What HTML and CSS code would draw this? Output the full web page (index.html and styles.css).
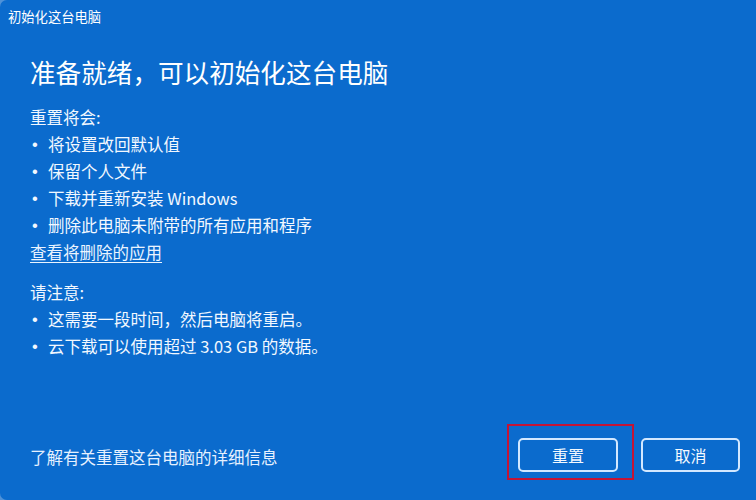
FILE: index.html
```html
<!DOCTYPE html>
<html lang="zh-CN">
<head>
<meta charset="utf-8">
<title>初始化这台电脑</title>
<link rel="stylesheet" href="styles.css">
</head>
<body>
<div class="window">
  <div class="titlebar">初始化这台电脑</div>
  <div class="content">
    <h1 class="heading">准备就绪，可以初始化这台电脑</h1>
    <div class="section">
      <div class="label">重置将会:</div>
      <ul class="list">
        <li><span class="dot">•</span>将设置改回默认值</li>
        <li><span class="dot">•</span>保留个人文件</li>
        <li><span class="dot">•</span>下载并重新安装 Windows</li>
        <li><span class="dot">•</span>删除此电脑未附带的所有应用和程序</li>
      </ul>
      <a class="link" href="#">查看将删除的应用</a>
    </div>
    <div class="section second">
      <div class="label">请注意:</div>
      <ul class="list">
        <li><span class="dot">•</span>这需要一段时间，然后电脑将重启。</li>
        <li><span class="dot">•</span>云下载可以使用超过 3.03 GB 的数据。</li>
      </ul>
    </div>
  </div>
  <div class="footer">
    <a class="more" href="#">了解有关重置这台电脑的详细信息</a>
    <div class="buttons">
      <button class="btn highlight">重置</button>
      <button class="btn">取消</button>
    </div>
  </div>
</div>
</body>
</html>
```

FILE: styles.css
```css
* { box-sizing: border-box; }
html, body {
  margin: 0;
  padding: 0;
  width: 756px;
  height: 500px;
  overflow: hidden;
  background: #4f92d8;
}
body {
  font-family: "Noto Sans CJK SC", "Noto Sans", "Liberation Sans", sans-serif;
  color: #f2f8ff;
}
.window {
  width: 756px;
  height: 500px;
  background: #0b6bcd;
  border-radius: 7px 0 0 7px;
  display: flex;
  flex-direction: column;
}
.titlebar {
  height: 34px;
  line-height: 34px;
  padding-left: 8px;
  font-size: 13.3px;
  color: #ffffff;
}
.content {
  padding: 0 30px;
  flex: 1;
}
.heading {
  margin: 20px 0 0;
  font-size: 25.6px;
  font-weight: 400;
  line-height: 36px;
  color: #ffffff;
  letter-spacing: 0;
}
.section {
  margin-top: 13.5px;
  font-size: 16.5px;
  line-height: 27px;
}
.section.second {
  margin-top: 13px;
}
.label { color: #f2f8ff; }
.list {
  list-style: none;
  margin: 0;
  padding: 0;
}
.list li {
  display: flex;
}
.dot {
  width: 18px;
  padding-left: 2px;
  flex: none;
  font-family: "Liberation Sans", sans-serif;
}
.link {
  display: inline-block;
  color: #eaf4ff;
  text-decoration: underline;
  text-underline-offset: 3px;
  text-decoration-thickness: 1px;
}
.footer {
  display: flex;
  align-items: center;
  justify-content: space-between;
  padding: 0 16px 28px 30px;
}
.more {
  font-size: 16.5px;
  line-height: 27px;
  color: #e6f1ff;
  text-decoration: none;
  padding-top: 5px;
}
.buttons {
  display: flex;
  gap: 23px;
}
.btn {
  width: 100px;
  height: 34px;
  background: #0b6bcd;
  border: 2px solid #d3e8ff;
  border-radius: 5px;
  color: #f4f9ff;
  font-family: "Noto Sans CJK SC", "Noto Sans", sans-serif;
  font-size: 16px;
  line-height: 28px;
  padding: 0;
}
.btn + .btn { width: 99px; }
.highlight {
  position: relative;
}
.highlight::after {
  content: "";
  position: absolute;
  left: -13px;
  right: -18px;
  top: -16px;
  bottom: -10px;
  border: 2px solid #c41435;
}
```
